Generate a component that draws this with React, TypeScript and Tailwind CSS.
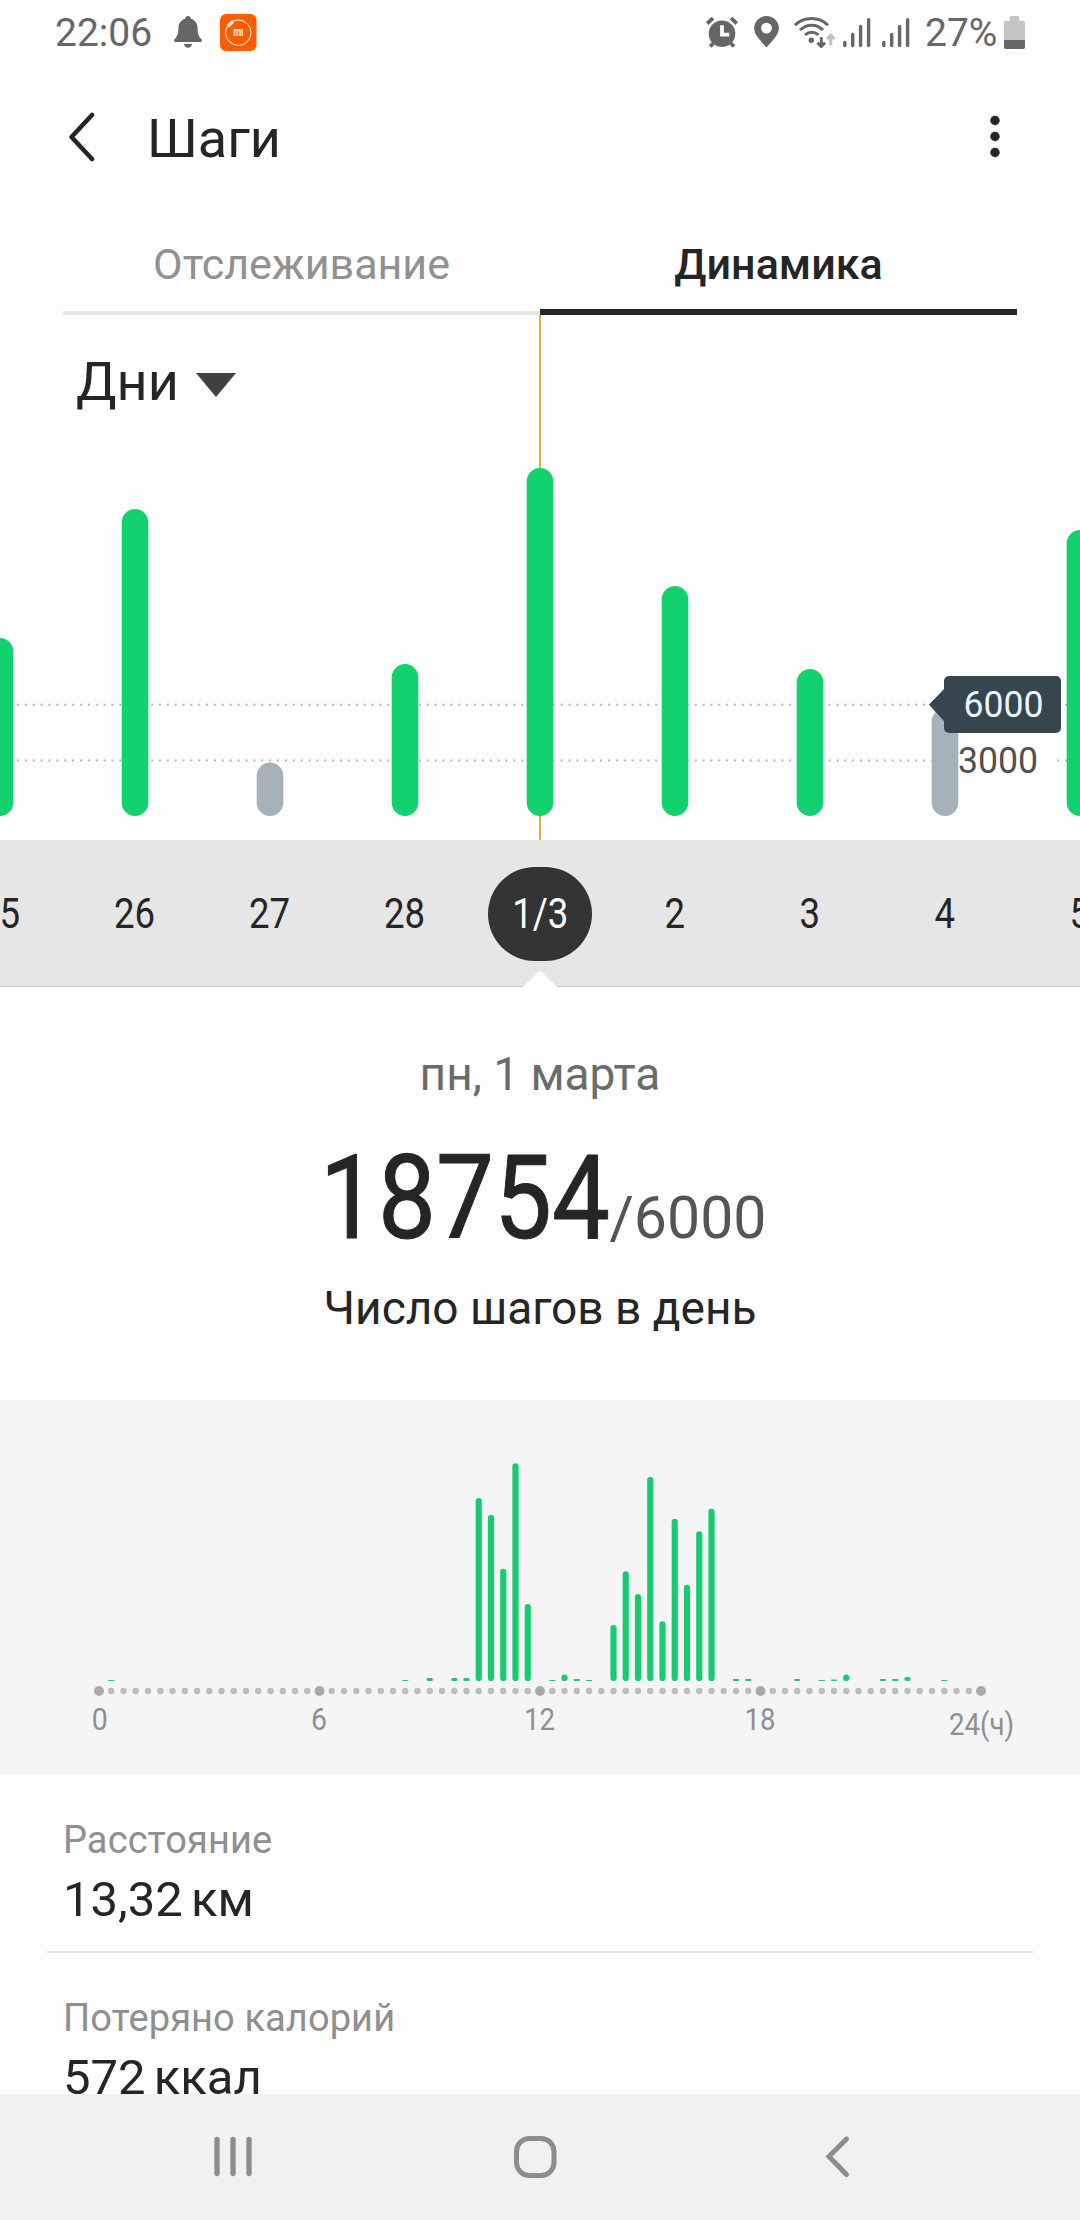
import { useState } from "react";

const GREEN = "#12d16f";
const GREY = "#a5b2ba";

const days = [
  { label: "25", top: 323, done: true },
  { label: "26", top: 194, done: true },
  { label: "27", top: 447.5, done: false },
  { label: "28", top: 349, done: true },
  { label: "1/3", top: 153, done: true },
  { label: "2", top: 271, done: true },
  { label: "3", top: 354, done: true },
  { label: "4", top: 393, done: false },
  { label: "5", top: 215, done: true },
];

// [20-minute slot, bar height]
const slots = [
  [1, 1], [25, 1], [27, 3], [29, 3], [30, 3],
  [31, 183], [32, 166], [33, 112.3], [34, 217.7], [35, 77],
  [37, 1], [38, 6.5], [39, 2], [40, 1],
  [42, 56], [43, 109.7], [44, 87], [45, 204], [46, 59.7], [47, 162.3], [48, 96.3], [49, 149.7], [50, 172.3],
  [52, 2], [53, 2], [57, 2], [59, 1], [60, 1.5], [61, 6.5], [64, 2], [65, 2], [66, 4], [69, 1],
];

function Signal() {
  return (
    <svg width="28" height="30" viewBox="0 0 28 30" stroke="#666" strokeWidth="3.4" strokeLinecap="round">
      <path d="M1.8 24.5V27.5M9.7 16.5V27.5M17.6 8.5V27.5M25.6 1.8V27.5" />
    </svg>
  );
}

function StatusBar() {
  return (
    <div className="flex h-16 items-center pr-[55px] pl-[55px] text-[39px] leading-none text-[#666]">
      <span className="w-[97px] pt-[3px] whitespace-nowrap">22:06</span>
      <svg className="ml-[22px]" width="28" height="32" viewBox="0 0 28 32" fill="#666">
        <path d="M14 0C12.3 0 11.2 1.1 11 2.8C7 4.2 4.6 7.2 4.5 11.5C4.4 18 3.6 20 .4 23.4C-.3 24.6 .2 26 1.6 26H26.4C27.8 26 28.3 24.6 27.6 23.4C24.4 20 23.6 18 23.5 11.5C23.4 7.2 21 4.2 17 2.8C16.8 1.1 15.7 0 14 0Z" />
        <path d="M10 28H18C17.6 30.5 16 31.8 14 31.8S10.4 30.5 10 28Z" />
      </svg>
      <svg className="ml-[17.5px]" width="37" height="37" viewBox="0 0 37 37">
        <rect width="36.5" height="37" rx="6" fill="#ff5c00" />
        <circle cx="18.3" cy="18.7" r="12.7" fill="none" stroke="#fff" strokeWidth="1" />
        <path d="M7.8 12.3L13 7.5" stroke="#fff" strokeWidth="3.2" />
        <text x="18.5" y="22" textAnchor="middle" textLength="10" lengthAdjust="spacingAndGlyphs" fontSize="12" fontWeight="700" fill="#fff">mı</text>
      </svg>

      <svg className="ml-auto" width="34" height="33" viewBox="0 0 34 33" fill="none" stroke="#666" strokeWidth="3.8">
        <circle cx="17" cy="17.7" r="13.3" fill="#666" stroke="none" />
        <path d="M2.2 7.5L8 2.2M26 2.2L31.8 7.5M5.2 30.5L10 25.5M29 30.5L24 25.5" />
        <path d="M17 9.3V18.6H24.3" stroke="#fdfdfd" />
      </svg>
      <svg className="ml-[15px]" width="25" height="32" viewBox="0 0 25 32">
        <path fillRule="evenodd" fill="#666" d="M12.5 0A12.3 12.3 0 0 0 .2 12.3C.2 19 6 24 12.5 31.5C19 24 24.8 19 24.8 12.3A12.3 12.3 0 0 0 12.5 0ZM12.5 6.7A5.4 5.4 0 1 1 12.5 17.5A5.4 5.4 0 1 1 12.5 6.7Z" />
      </svg>
      <svg className="ml-[14.5px]" width="42" height="32" viewBox="0 0 42 32" fill="none" stroke="#666" strokeWidth="3">
        <path d="M1 9.2C10 .2 25 .2 34 9.2M6 14C13 7.5 22.5 7.5 29 14M11 19C15 15.2 20.5 15.2 24.5 19" />
        <circle cx="17.3" cy="24.3" r="2.7" fill="#666" stroke="none" />
        <path d="M27.3 21.3V30M23.5 26.7L27.3 30.5L31.1 26.7" />
        <path d="M36.7 29V19.5M32.9 23L36.7 19.2L40.5 23" stroke="#c1c1c1" />
      </svg>
      <div className="ml-[7.5px] flex gap-[11px] pt-px">
        <Signal />
        <Signal />
      </div>
      <span className="ml-[15px] w-[73px] pt-[3px] whitespace-nowrap">27%</span>
      <svg className="ml-[6px]" width="21" height="33" viewBox="0 0 21 33">
        <path d="M5.7 1.5Q5.7 0 7.2 0H13.8Q15.3 0 15.3 1.5V5H19.5Q21 5 21 6.5V24H0V6.5Q0 5 1.5 5H5.7Z" fill="#c4c4c4" />
        <path d="M0 24H21V31Q21 33 19 33H2Q0 33 0 31Z" fill="#666" />
      </svg>
    </div>
  );
}

function DailyChart() {
  return (
    <svg className="absolute inset-0" width="1080" height="525" viewBox="0 0 1080 525">
      <path d="M1.2 389.7H1080M1.2 445.4H1080" stroke="#b8b8b8" strokeWidth="2" strokeDasharray="2 5.88" />
      <rect x="958" y="430" width="99" height="32" fill="#fdfdfd" />
      <rect x="539" y="0" width="2" height="525" fill="#dcae40" />
      {days.map((day, i) => (
        <rect
          key={day.label}
          x={i * 135 - 13.3}
          y={day.top}
          width="26.6"
          height={501 - day.top}
          rx="13.3"
          fill={day.done ? GREEN : GREY}
        />
      ))}
      <path d="M929.5 389.7L944.5 374V406Z" fill="#36464f" stroke="#36464f" strokeLinejoin="round" />
      <rect x="944" y="361" width="117" height="57" rx="5" fill="#36464f" />
      <text x="963.5" y="401.7" fontSize="37" textLength="80" lengthAdjust="spacingAndGlyphs" fill="#eaf6fd">6000</text>
      <text x="958" y="458" fontSize="37" textLength="80" lengthAdjust="spacingAndGlyphs" fill="#505050">3000</text>
    </svg>
  );
}

function HourlyChart() {
  const dots = Array.from({ length: 73 }, (_, i) => i);
  return (
    <svg width="1080" height="375" viewBox="0 0 1080 375">
      {slots.map(([slot, h]) => (
        <rect
          key={slot}
          x={99 + slot * 12.25 - 3.1}
          y={281 - h}
          width="6.2"
          height={h}
          rx={Math.min(3.1, h / 2)}
          fill="#19cb70"
        />
      ))}
      {dots.map((i) => (
        <circle
          key={i}
          cx={99 + i * 12.25}
          cy="291"
          r={i % 18 === 0 ? 4.9 : 3.2}
          fill={i % 18 === 0 ? "#a9a9a9" : "#bcbcbc"}
        />
      ))}
      <g fontSize="32" fill="#8f8f8f" textAnchor="middle">
        <text x="99.7" y="330" textLength="16" lengthAdjust="spacingAndGlyphs">0</text>
        <text x="319" y="330" textLength="16" lengthAdjust="spacingAndGlyphs">6</text>
        <text x="539.5" y="330" textLength="31" lengthAdjust="spacingAndGlyphs">12</text>
        <text x="760" y="330" textLength="31" lengthAdjust="spacingAndGlyphs">18</text>
        <text x="981.5" y="335" textLength="65" lengthAdjust="spacingAndGlyphs">24(ч)</text>
      </g>
    </svg>
  );
}

function Stat(props: { title: string; value: string }) {
  return (
    <div className="pt-[41px] pb-[23px] pl-[16px] whitespace-nowrap">
      <p className="text-[38px] leading-[48px] tracking-[0.1px] text-[#8f8f8f]">{props.title}</p>
      <p className="mt-[6px] text-[49px] leading-[59px] [word-spacing:-4px] -mb-px">{props.value}</p>
    </div>
  );
}

export default function App() {
  const [selected, setSelected] = useState(4);

  return (
    <div className="flex h-[2220px] w-[1080px] flex-col overflow-hidden bg-[#fdfdfd] font-[Roboto,sans-serif] text-[#252525]">
      <StatusBar />

      <header className="flex h-[146px] items-center pr-[79px] pl-[67px]">
        <button>
          <svg width="29" height="50" viewBox="0 0 29 50" fill="none" stroke="#252525" strokeWidth="4.5" strokeLinecap="round" strokeLinejoin="round">
            <path d="M25 3L4.5 25L25 47" />
          </svg>
        </button>
        <h1 className="ml-[51px] pt-[4px] text-[54px] leading-none">Шаги</h1>
        <button className="ml-auto">
          <svg width="12" height="44" viewBox="0 0 12 44" fill="#252525">
            <circle cx="6" cy="5.5" r="4.7" />
            <circle cx="6" cy="21.5" r="4.7" />
            <circle cx="6" cy="37.5" r="4.7" />
          </svg>
        </button>
      </header>

      <nav className="mx-[63px] flex h-[105px] shrink-0 text-center text-[43px] leading-[109px]">
        <button className="h-[105px] flex-1 border-b-4 border-[#e6e6e6] text-[#919191]">Отслеживание</button>
        <button className="h-[105px] flex-1 border-b-6 border-[#252525] font-medium">Динамика</button>
      </nav>

      <section className="relative h-[525px] shrink-0">
        <DailyChart />
        <button className="relative mt-[34px] ml-[76px] flex items-center text-[54px] leading-[66px]">
          Дни
          <svg className="mt-[5px] ml-[17px]" width="40" height="24" viewBox="0 0 40 24" fill="#404040">
            <path d="M0 0H40L20 24Z" />
          </svg>
        </button>
      </section>

      {/* dates */}
      <div className="relative flex h-[147px] shrink-0 items-center justify-center border-b border-[#cbcbcb] bg-[#e6e6e6] text-[42px]">
        {days.map((day, i) => (
          <button key={day.label} className="flex w-[135px] shrink-0 justify-center" onClick={() => setSelected(i)}>
            <span
              className={
                i === selected
                  ? "mt-[2px] flex h-[94px] w-[104px] items-center justify-center rounded-[49px] bg-[#333] pb-[2px] text-white"
                  : ""
              }
            >
              <span className="block scale-x-[0.87]">{day.label}</span>
            </span>
          </button>
        ))}
        <svg className="absolute -bottom-px left-[522px]" width="36" height="17" viewBox="0 0 36 18" fill="#fdfdfd">
          <path d="M0 18L16 2Q18 0 20 2L36 18Z" />
        </svg>
      </div>

      {/* day summary */}
      <section className="flex h-[413px] shrink-0 flex-col items-center pt-[61px] whitespace-nowrap">
        <p className="text-[46px] leading-[52px] text-[#6b6b6b]">пн, 1 марта</p>
        <div className="mt-[41px] flex items-baseline leading-[115px]">
          <span className="-ml-[30px] origin-right scale-x-[0.89] text-[116px] [-webkit-text-stroke:1px_#252525]">18754</span>
          <span className="text-[59px] leading-none text-[#555]">/6000</span>
        </div>
        <p className="mt-[24px] text-[46px] leading-[56px]">Число шагов в день</p>
      </section>

      <section className="h-[375px] shrink-0 bg-[#f5f5f5]">
        <HourlyChart />
      </section>

      <section className="mx-[47px] h-[319px] shrink-0 divide-y-2 divide-[#e4e4e4] overflow-hidden">
        <Stat title="Расстояние" value="13,32 км" />
        <Stat title="Потеряно калорий" value="572 ккал" />
      </section>

      <footer className="flex h-[126px] shrink-0 items-center bg-[#f1f1f1] pl-[212px]">
        <svg width="42" height="44" viewBox="0 0 42 44" stroke="#8d8d8d" strokeWidth="5.3" strokeLinecap="round">
          <path d="M5 4.5V38.5M21 4.5V38.5M37 4.5V38.5" />
        </svg>
        <svg className="ml-[258px]" width="46" height="44" viewBox="0 0 46 44" fill="none" stroke="#8d8d8d" strokeWidth="5">
          <rect x="4.5" y="3.5" width="37.5" height="37" rx="13" />
        </svg>
        <svg className="ml-[266px]" width="28" height="44" viewBox="0 0 28 44" fill="none" stroke="#8d8d8d" strokeWidth="5" strokeLinecap="round">
          <path d="M22.5 4L5 21.5L22.5 39.5" />
        </svg>
      </footer>
    </div>
  );
}
